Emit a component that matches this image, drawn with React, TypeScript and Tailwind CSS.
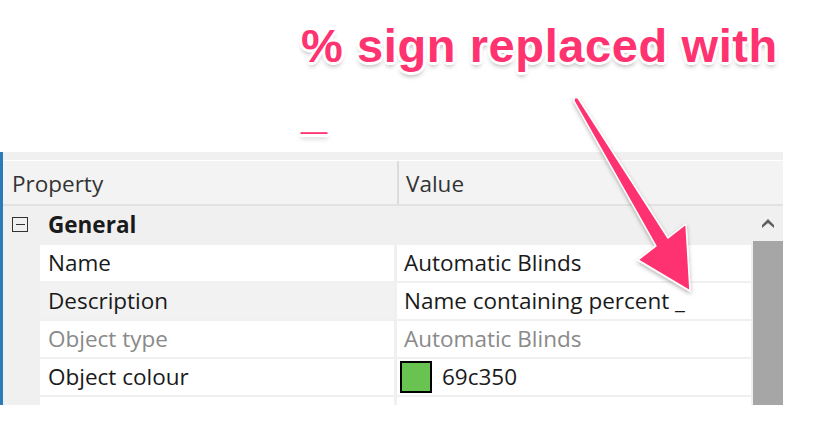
const rows = [
  { label: "Name", value: "Automatic Blinds" },
  { label: "Description", value: "Name containing percent _", active: true },
  { label: "Object type", value: "Automatic Blinds", muted: true },
  { label: "Object colour", value: "69c350", swatch: "#69c350" },
  { label: "Actuator blind type", value: "Adjustable" },
]

const Arrow = () => (
  <svg className="absolute left-0 top-0" width="840" height="448" viewBox="0 0 840 448">
    <defs>
      <filter id="shadow" x="-20%" y="-20%" width="140%" height="140%">
        <feDropShadow dx="0" dy="2" stdDeviation="2" floodColor="#000" floodOpacity="0.3" />
      </filter>
    </defs>
    <path
      d="M578 98 L668 238 L686 224 L690 291 L638 260 L656 246 L574 101 Q574 96 578 98 Z"
      fill="#fe3370"
      stroke="#fff"
      strokeWidth="1.5"
      strokeLinejoin="round"
      filter="url(#shadow)"
    />
  </svg>
)

const App = () => {
  return (
    <div className="relative w-[840px] h-[448px] overflow-hidden bg-white font-['Open_Sans','Noto_Sans',sans-serif]">
      <div className="h-[152px] pl-[301px] pt-[13px] font-['Liberation_Sans',Arial,sans-serif] font-bold text-[47px] leading-[66px] tracking-[0.6px] text-[#fe3370] [text-shadow:-2px_-2px_0_#fff,2px_-2px_0_#fff,-2px_2px_0_#fff,2px_2px_0_#fff,0_-3px_0_#fff,0_3px_0_#fff,-3px_0_0_#fff,3px_0_0_#fff,0_4px_5px_rgba(0,0,0,0.35)]">
        <div>% sign replaced with</div>
        <div>_</div>
      </div>

      <div className="flex flex-col w-[783px] h-[253px] overflow-hidden border-l-[3px] border-[#2b7bb9] bg-[#f0f0f0] text-[22.5px] text-[#1a1a1a]">
        <div className="h-[8px] shrink-0 bg-[#f0f0f0]" />
        <div className="h-[1px] shrink-0 bg-white" />
        <div className="flex h-[45px] shrink-0 bg-[#f3f3f3] border-b-2 border-[#e2e2e2] text-[#333]">
          <div className="flex items-center w-[394px] pl-[9px] pt-[2px]">Property</div>
          <div className="w-[2px] bg-[#dcdcdc]" />
          <div className="flex items-center pl-[7px] pt-[2px]">Value</div>
        </div>

        <div className="flex flex-1 min-h-0">
          <div className="flex flex-col flex-1 gap-[2px]">
            <div className="flex items-center h-[37px] shrink-0">
              <div className="flex items-center justify-center w-[16px] h-[15px] ml-[9px] border-[1.5px] border-[#333]">
                <div className="w-[9px] h-[1.5px] bg-[#333]" />
              </div>
              <span className="ml-[20px] font-bold">General</span>
            </div>
            {rows.map((r) => (
              <div key={r.label} className="flex h-[36px] shrink-0">
                <div className="w-[37px] shrink-0" />
                <div
                  className={
                    "flex items-center w-[354px] shrink-0 pl-[8px] " +
                    (r.active ? "bg-[#f2f2f2]" : "bg-white") +
                    (r.muted ? " text-[#8a8a8a]" : "")
                  }
                >
                  {r.label}
                </div>
                <div className="w-[3px] shrink-0" />
                <div className={"flex items-center flex-1 bg-white pl-[7px] mr-[2px]" + (r.muted ? " text-[#8a8a8a]" : "")}>
                  {r.swatch && (
                    <div className="w-[32px] h-[32px] -ml-[4px] mr-[10px] border-2 border-black bg-[#69c350]" />
                  )}
                  {r.value}
                </div>
              </div>
            ))}
          </div>

          <div className="flex flex-col w-[30px] shrink-0 bg-[#f0f0f0]">
            <div className="flex items-center justify-center h-[35px]">
              <svg width="12" height="9" viewBox="0 0 12 9">
                <path d="M6 0 L12 6 L12 9 L6 4 L0 9 L0 6 Z" fill="#606060" />
              </svg>
            </div>
            <div className="flex-1 bg-[#a6a6a6]" />
          </div>
        </div>
      </div>

      <Arrow />
    </div>
  )
}

export default App
